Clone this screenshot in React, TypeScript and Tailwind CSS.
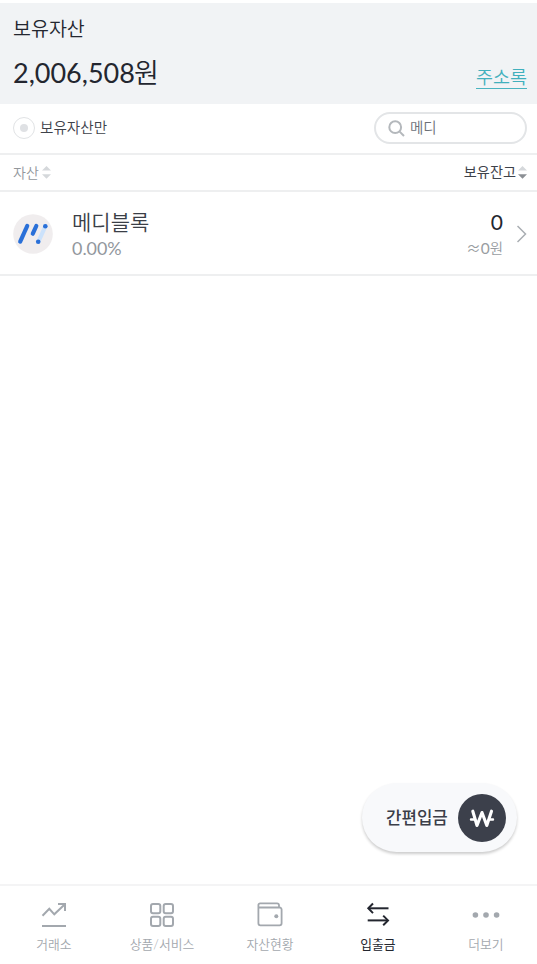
import { ReactNode } from "react";

const assets = [{ name: "메디블록", rate: "0.00%", balance: "0", value: "0" }];

const tabs: { label: string; icon: ReactNode; active?: boolean }[] = [
    { label: "거래소", icon: <ExchangeIcon /> },
    { label: "상품/서비스", icon: <ServiceIcon /> },
    { label: "자산현황", icon: <WalletIcon /> },
    { label: "입출금", icon: <TransferIcon />, active: true },
    { label: "더보기", icon: <MoreIcon /> },
];

function ExchangeIcon() {
    return (
        <svg width="28" height="28" viewBox="0 0 28 28" fill="none" stroke="currentColor" strokeWidth="2">
            <path d="M2.5 15.8 9.3 8.8 14.3 14.3 24.6 4.5" />
            <path d="M18 4H25V11" />
            <path d="M2 26H26" />
        </svg>
    );
}

function ServiceIcon() {
    return (
        <svg width="28" height="28" viewBox="0 0 28 28" fill="none" stroke="currentColor" strokeWidth="2">
            <rect x="3" y="4" width="9.3" height="9.3" rx="2" />
            <rect x="15.7" y="4" width="9.3" height="9.3" rx="2" />
            <rect x="3" y="16.7" width="9.3" height="9.3" rx="2" />
            <rect x="15.7" y="16.7" width="9.3" height="9.3" rx="2" />
        </svg>
    );
}

function WalletIcon() {
    return (
        <svg width="28" height="28" viewBox="0 0 28 28" fill="none" stroke="currentColor" strokeWidth="1.8">
            <path d="M2.4 7.5V23.3a2 2 0 0 0 2 2H23.6a2 2 0 0 0 2-2V9.5a2 2 0 0 0-2-2H2.4V5a1.7 1.7 0 0 1 1.7-1.7H21a2 2 0 0 1 2 2V7.5" />
            <circle cx="20.3" cy="16.3" r="2" fill="currentColor" stroke="none" />
        </svg>
    );
}

function TransferIcon() {
    return (
        <svg width="28" height="28" viewBox="0 0 28 28" fill="none" stroke="currentColor" strokeWidth="2">
            <path d="M24.5 8.3H4.5" />
            <path d="M9 3.5 4.3 8.3 9 13.1" />
            <path d="M3.7 20.4H23.8" />
            <path d="M19.2 15.6 24 20.4 19.2 25.2" />
        </svg>
    );
}

function MoreIcon() {
    return (
        <svg width="28" height="28" viewBox="0 0 28 28" fill="currentColor">
            <circle cx="3.4" cy="15" r="2.8" />
            <circle cx="14" cy="15" r="2.8" />
            <circle cx="24.6" cy="15" r="2.8" />
        </svg>
    );
}

function SortIcon({ desc = false }: { desc?: boolean }) {
    return (
        <svg width="9" height="13" viewBox="0 0 9 13">
            <path d="M4.5 0 9 4.5H0Z" fill="#d5d8db" />
            <path d="M4.5 12.7 9 8.2H0Z" fill={desc ? "#8b8f94" : "#d5d8db"} />
        </svg>
    );
}

function CoinLogo() {
    return (
        <svg width="40" height="40" viewBox="0 0 40 40" strokeLinecap="round" strokeWidth="4.2">
            <circle cx="20" cy="20" r="19.8" fill="#f0edee" />
            <path d="M25.5 27.5 32.5 12" stroke="#cce2fb" />
            <path d="M7.2 27.6 14.2 12" stroke="#2a70d8" />
            <path d="M19.8 19.7 23.3 12" stroke="#2a70d8" />
            <circle cx="32.3" cy="12.2" r="2.3" fill="#2a70d8" />
            <circle cx="25.2" cy="27.7" r="2.3" fill="#2a70d8" />
        </svg>
    );
}

export default function App() {
    return (
        <div className="flex h-[964px] w-[537px] flex-col overflow-hidden bg-white pt-[3px] font-['Lato','Noto_Sans_CJK_KR',sans-serif] font-[350] text-[#23262f]">
            {/* Total balance */}
            <header className="flex h-[101px] shrink-0 items-end justify-between bg-[#f1f3f5] pr-[10px] pl-[13px]">
                <div className="h-full">
                    <h1 className="pt-[12px] text-[19.5px] leading-7">보유자산</h1>
                    <p className="mt-[12px] text-[27px] leading-9 font-normal">
                        2,006,508<span className="-ml-px font-[350]">원</span>
                    </p>
                </div>
                <a className="mb-[15px] border-b border-[#4ab4c0] pt-px text-[18.5px] leading-[22px] text-[#41b0bd]">주소록</a>
            </header>

            {/* Filter and search */}
            <div className="flex h-[51px] shrink-0 items-center justify-between border-b-2 border-[#eeeff0] pr-[10px] pl-[13px]">
                <label className="mb-px flex items-center gap-[5px] text-[14.6px] text-[#3e424a]">
                    <span className="flex size-[22px] items-center justify-center rounded-full border border-[#e1e3e5]">
                        <span className="size-2 rounded-full bg-[#dfe1e4]" />
                    </span>
                    보유자산만
                </label>
                <div className="mb-px flex h-8 w-[153px] items-center gap-[5px] rounded-full border-2 border-[#e3e5e7] pl-3 text-[14.5px] text-[#6b7078]">
                    <svg width="17" height="17" viewBox="0 0 17 17" fill="none" stroke="#b4b8bc" strokeWidth="2">
                        <circle cx="7.2" cy="7.2" r="5.9" />
                        <path d="M11.4 11.4 16 16" />
                    </svg>
                    메디
                </div>
            </div>

            {/* Column heads */}
            <div className="flex h-[37px] shrink-0 items-center justify-between border-b-2 border-[#eeeff0] pr-[10px] pl-[13px] text-sm">
                <div className="flex items-center gap-[3px] text-[#93979c]">
                    자산
                    <SortIcon />
                </div>
                <div className="flex items-center gap-[2px] text-[14.2px] font-normal text-[#3e424a]">
                    보유잔고
                    <SortIcon desc />
                </div>
            </div>

            <ul>
                {assets.map((asset) => (
                    <li key={asset.name} className="flex h-[84px] items-center border-b-2 border-[#eeeff0] pt-[2px] pr-[10px] pl-[13px]">
                        <CoinLogo />
                        <div className="ml-[19px] flex-1">
                            <div className="text-[21px] leading-7 text-[#3a3e46]">{asset.name}</div>
                            <div className="text-[17.9px] leading-6 font-normal text-[#92979d]">{asset.rate}</div>
                        </div>
                        <div className="text-right">
                            <div className="text-[21px] leading-7 font-normal">{asset.balance}</div>
                            <div className="text-[14.5px] leading-6 text-[#999da2]">
                                <span className="font-['Noto_Sans_CJK_KR',sans-serif]">≈</span>
                                <span className="text-[15.5px] font-normal">{asset.value}</span>원
                            </div>
                        </div>
                        <svg className="ml-[14px]" width="10" height="18" viewBox="0 0 10 18" fill="none" stroke="#a9adb2" strokeWidth="1.5">
                            <path d="M.5 1 8.5 9 .5 17" />
                        </svg>
                    </li>
                ))}
            </ul>

            {/* Quick deposit */}
            <button className="mt-auto mr-5 mb-8 flex h-[69px] w-[155px] shrink-0 items-center justify-between self-end rounded-full bg-[#f8f9fb] pr-[11px] pl-[24px] text-[16.8px] font-medium text-[#3b3e48] shadow-[0_2px_3px_rgba(0,0,0,0.2)]">
                간편입금
                <svg width="48" height="48" viewBox="0 0 48 48" fill="none" stroke="#fff" strokeLinecap="round" strokeLinejoin="round">
                    <circle cx="24" cy="24" r="24" fill="#3c404b" stroke="none" />
                    <path d="M14.8 17.2 19 31.5 24 18.5 28.8 31.5 33.5 17.2" strokeWidth="3.1" />
                    <path d="M13 25.5H17M31 25.5H35" strokeWidth="2.4" />
                </svg>
            </button>

            {/* Bottom tabs */}
            <nav className="grid h-[80px] w-[540px] shrink-0 grid-cols-5 border-t-2 border-[#f4f4f5]">
                {tabs.map((tab) => (
                    <a
                        key={tab.label}
                        className={`flex flex-col items-center pt-[14px] text-[12.8px] leading-5 ${tab.active ? "font-normal text-[#23262f]" : "text-[#a3a8ae]"}`}
                    >
                        {tab.icon}
                        <span className="mt-[6px]">{tab.label}</span>
                    </a>
                ))}
            </nav>
        </div>
    );
}
